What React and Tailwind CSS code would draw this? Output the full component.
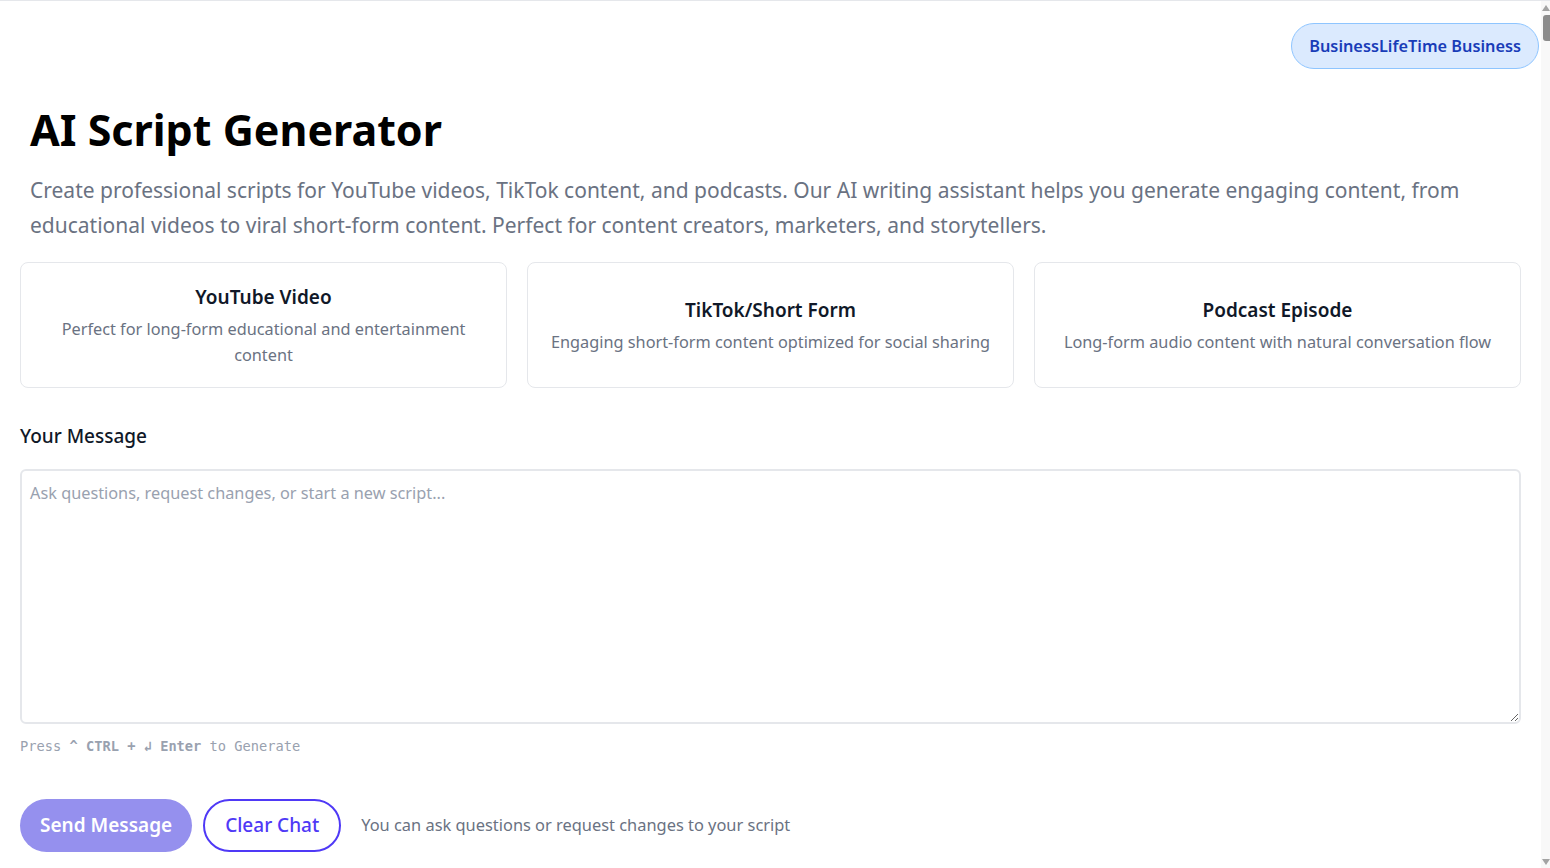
import React, { useState } from "react";

const scriptTypes = [
  {
    title: "YouTube Video",
    desc: "Perfect for long-form educational and entertainment content",
  },
  {
    title: "TikTok/Short Form",
    desc: "Engaging short-form content optimized for social sharing",
  },
  {
    title: "Podcast Episode",
    desc: "Long-form audio content with natural conversation flow",
  },
];

const App = () => {
  const [message, setMessage] = useState("");

  return (
    <div className="flex h-screen overflow-hidden border-t border-gray-200 bg-white font-['Noto_Sans',sans-serif]">
      <main className="min-w-0 flex-1">
        <div className="flex justify-end pt-[22px] pr-[2px]">
          <span className="rounded-full border border-blue-300 bg-blue-100 px-[17px] py-[10px] text-[16.3px] font-semibold text-blue-800">
            BusinessLifeTime Business
          </span>
        </div>

        <div className="px-5">
          <div className="px-2.5">
            <h1 className="mt-[33px] text-[43px] font-bold leading-[56px] text-black">
              AI Script Generator
            </h1>
            <p className="mt-[15px] text-[21px] leading-[35px] text-gray-500">
              Create professional scripts for YouTube videos, TikTok content,
              and podcasts. Our AI writing assistant helps you generate
              engaging content, from educational videos to viral short-form
              content. Perfect for content creators, marketers, and
              storytellers.
            </p>
          </div>

          <div className="mt-[19px] grid grid-cols-3 gap-5">
            {scriptTypes.map((t) => (
              <div
                key={t.title}
                className="flex h-[126px] flex-col items-center justify-center rounded-lg border border-gray-200 px-5 text-center"
              >
                <h3 className="text-[19px] font-semibold leading-7 text-gray-900">
                  {t.title}
                </h3>
                <p className="mt-[5px] text-[16.3px] leading-[26px] text-gray-500">
                  {t.desc}
                </p>
              </div>
            ))}
          </div>

          <label
            htmlFor="msg"
            className="mt-[34px] block text-[19px] font-medium leading-7 text-gray-900"
          >
            Your Message
          </label>
          <textarea
            id="msg"
            value={message}
            onChange={(e) => setMessage(e.target.value)}
            placeholder="Ask questions, request changes, or start a new script..."
            className="mt-[19px] block h-[255px] w-full rounded-md border-2 border-gray-200 px-2 py-[10px] text-[16.3px] text-gray-900 outline-none placeholder:text-gray-400"
          />
          <p className="mt-[12px] font-['DejaVu_Sans_Mono',monospace] text-[13.7px] text-gray-400">
            Press <b>^ CTRL</b> <b>+</b> <b>↲ Enter</b> to Generate
          </p>

          <div className="mt-[42px] flex items-center gap-[11px]">
            <button className="h-[53px] rounded-full bg-[#9590ee] px-[20px] text-[19px] font-semibold text-white">
              Send Message
            </button>
            <button className="h-[53px] rounded-full border-2 border-indigo-600 px-[20px] text-[19px] font-medium text-indigo-600">
              Clear Chat
            </button>
            <p className="ml-[9px] text-[16.4px] text-gray-500">
              You can ask questions or request changes to your script
            </p>
          </div>
        </div>
      </main>

      {/* page scrollbar */}
      <aside className="flex w-[9px] flex-col items-end bg-[#f8f8f8]">
        <svg width="8" height="8" viewBox="0 0 8 8" className="mt-[3px]">
          <path d="M4 1 L8 7 L0 7 Z" fill="#a3a3a3" />
        </svg>
        <div className="mt-[3px] h-[26px] w-[7px] rounded-l-[3px] bg-[#8c8c8c]" />
        <svg width="8" height="8" viewBox="0 0 8 8" className="mt-auto mb-[2px]">
          <path d="M0 1 L8 1 L4 7 Z" fill="#a3a3a3" />
        </svg>
      </aside>
    </div>
  );
};

export default App;
